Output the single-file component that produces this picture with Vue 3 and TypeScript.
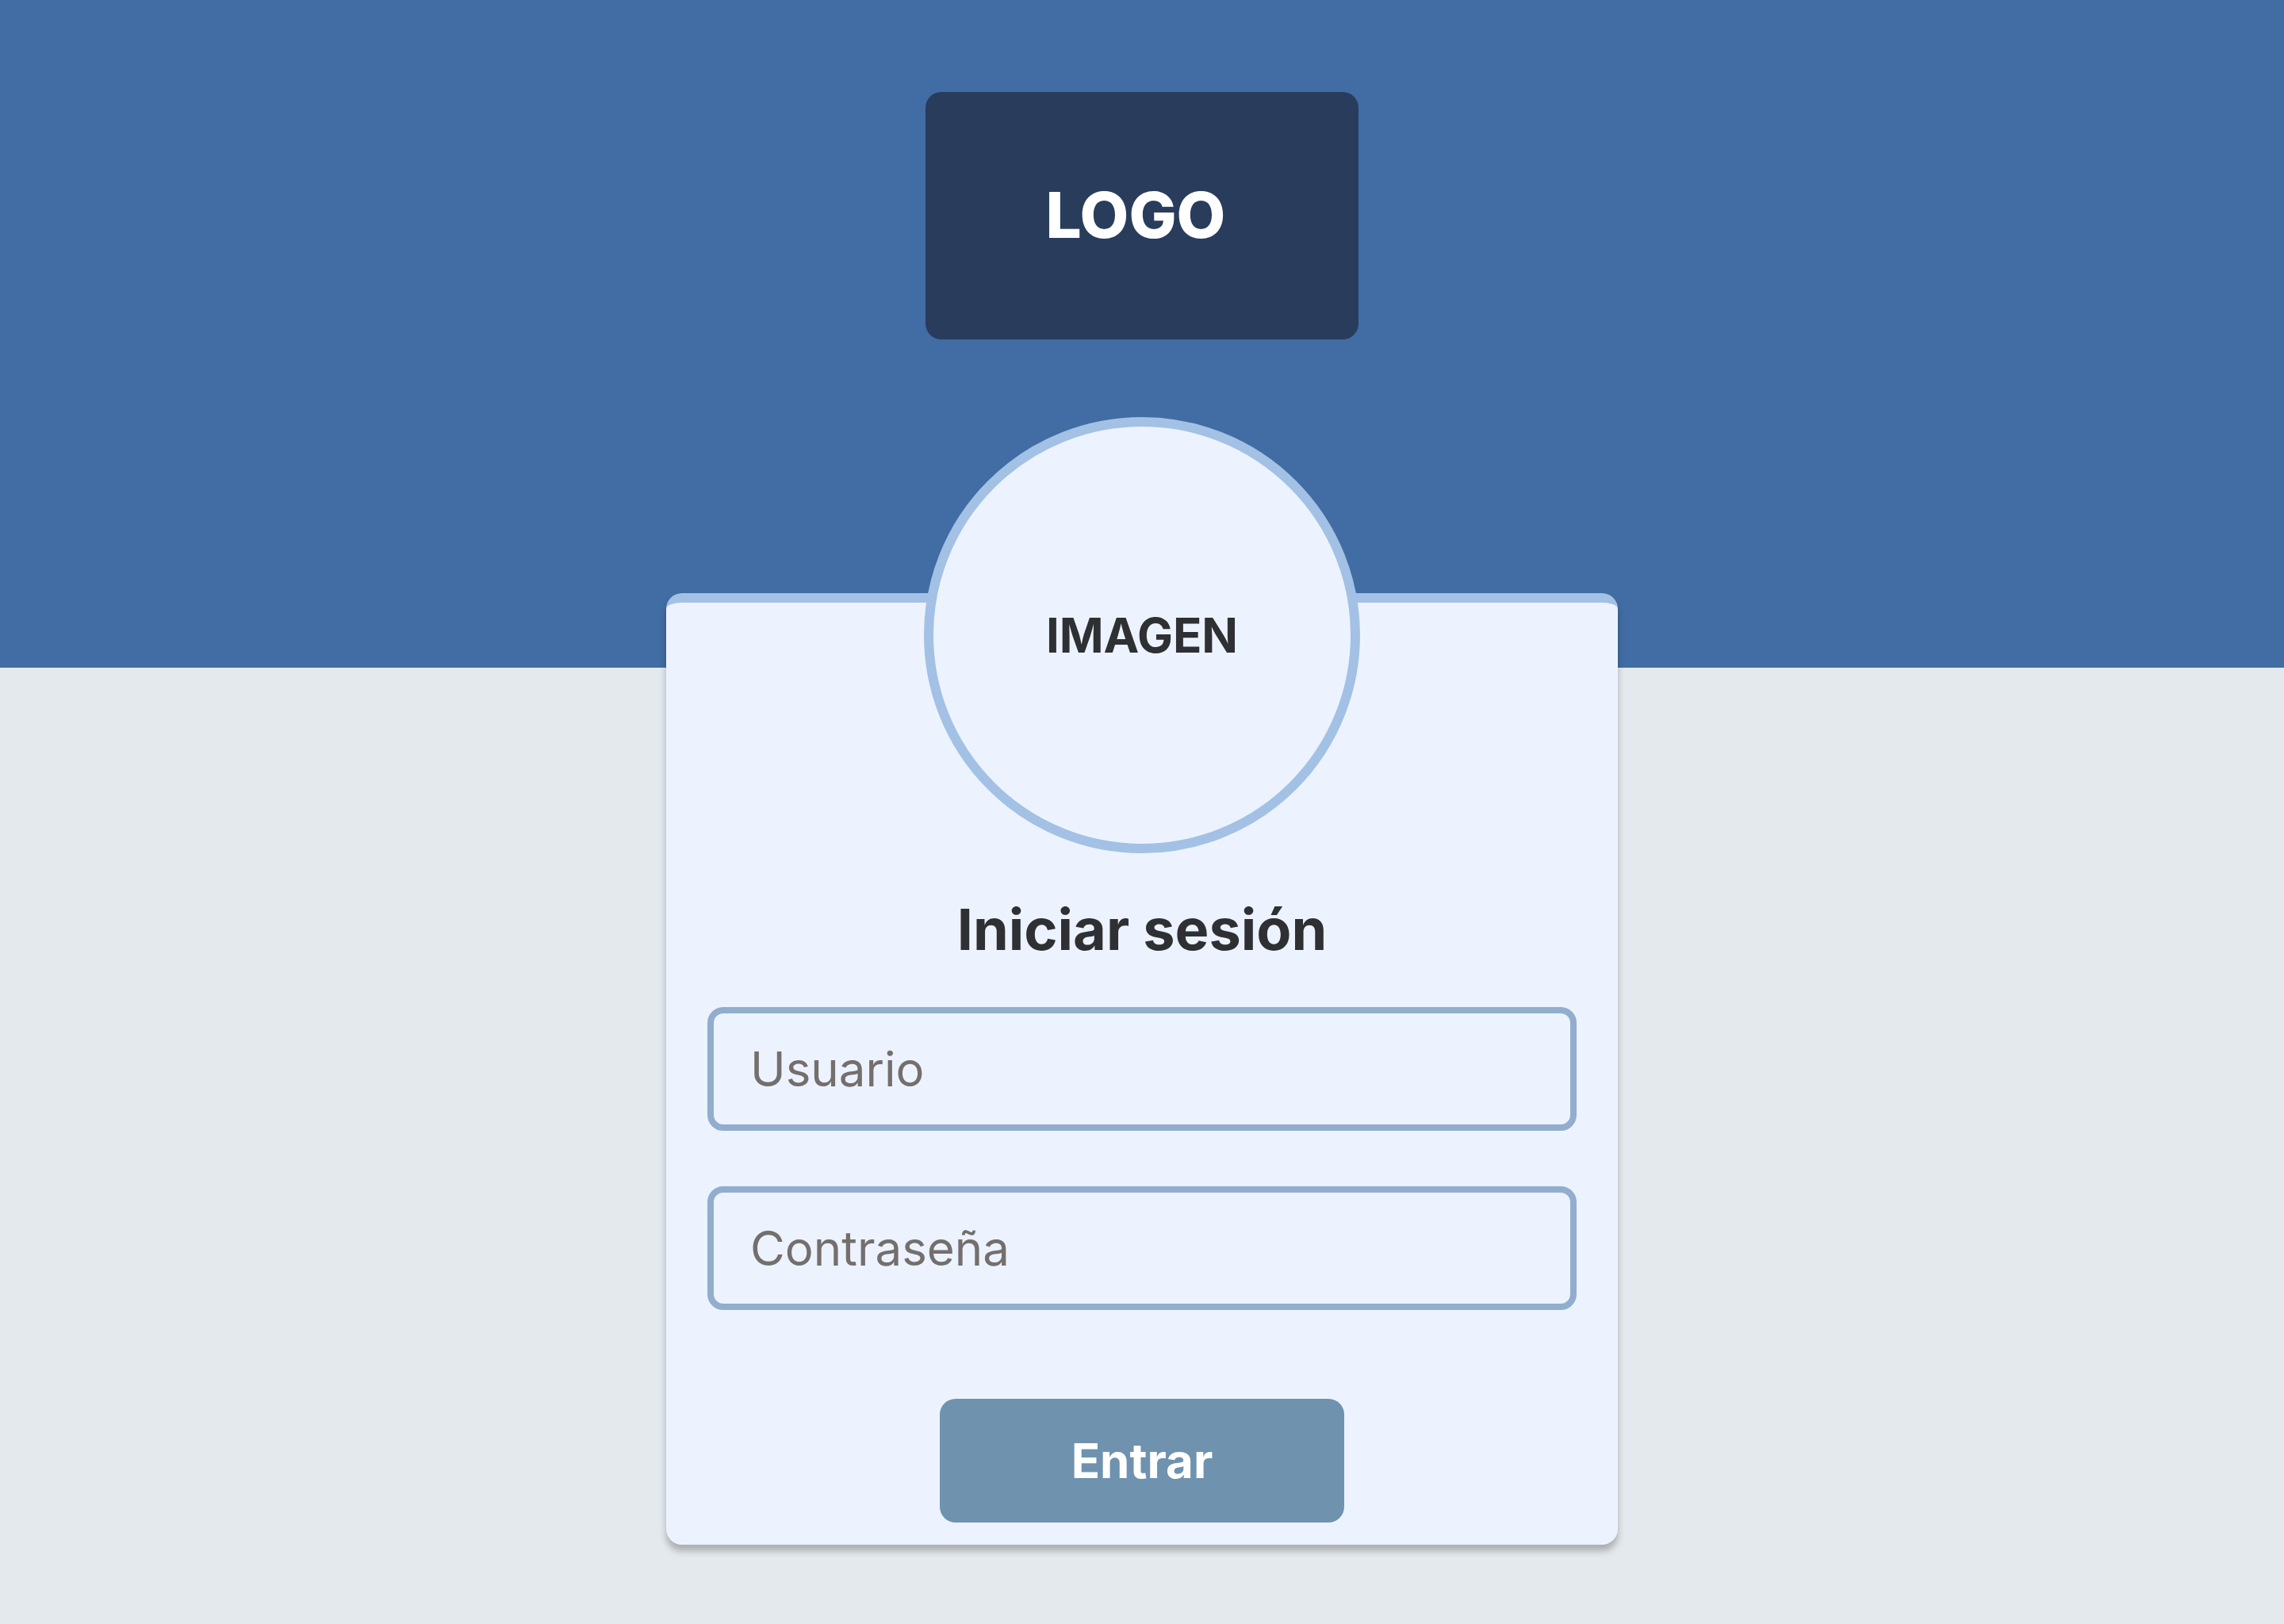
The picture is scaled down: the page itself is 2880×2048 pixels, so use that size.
<script setup lang="ts">
import { ref } from 'vue'

const username = ref('')
const password = ref('')
</script>

<template>
  <div class="page">
    <header class="banner">
      <div class="logo">LOGO</div>
    </header>
    <main class="content">
      <form class="card" @submit.prevent>
        <div class="avatar">IMAGEN</div>
        <h1 class="title">Iniciar sesión</h1>
        <div class="fields">
          <input v-model="username" class="field" type="text" name="username" aria-label="Usuario" placeholder="Usuario" autocomplete="username" />
          <input v-model="password" class="field" type="password" name="password" aria-label="Contraseña" placeholder="Contraseña" autocomplete="current-password" />
        </div>
        <button class="submit" type="submit">Entrar</button>
      </form>
    </main>
  </div>
</template>

<style>
body {
  margin: 0;
  background: #e4e9ed;
}
</style>

<style scoped>
.page {
  min-height: 100vh;
  box-sizing: border-box;
  padding-bottom: 100px;
  background: #e4e9ed;
  color: #2f3033;
  font-family: Inter, 'Liberation Sans', sans-serif;
}

.banner {
  display: flex;
  justify-content: center;
  padding: 116px 0 414px;
  background: #416ca4;
}

.logo {
  display: flex;
  align-items: center;
  justify-content: center;
  box-sizing: border-box;
  width: 546px;
  height: 312px;
  padding: 0 16px 2px 0;
  border-radius: 20px;
  background: #293c5c;
  color: #fff;
  font-size: 80px;
  font-weight: 800;
  line-height: 96px;
}

.content {
  display: flex;
  justify-content: center;
  margin-top: -94px;
}

.card {
  display: flex;
  flex-direction: column;
  align-items: center;
  box-sizing: border-box;
  width: 100%;
  max-width: 1200px;
  padding: 0 52px 28px;
  border-top: 12px solid #a3c1e4;
  border-radius: 20px;
  background: #ecf3ff;
  box-shadow: 0 8px 8px rgba(0, 0, 0, 0.25);
}

.avatar {
  display: flex;
  align-items: center;
  justify-content: center;
  box-sizing: border-box;
  width: 550px;
  height: 550px;
  margin-top: -234px;
  border: 12px solid #a3c1e4;
  border-radius: 50%;
  background: #ecf3ff;
  font-size: 60px;
  font-weight: 700;
  line-height: 72px;
}

.title {
  margin: 52px 0 54px;
  font-size: 72px;
  font-weight: 700;
  line-height: 88px;
}

.fields {
  display: flex;
  flex-direction: column;
  align-self: stretch;
  gap: 70px;
}

.field {
  box-sizing: border-box;
  width: 100%;
  height: 156px;
  padding: 0 46px;
  border: 8px solid #92adcd;
  border-radius: 20px;
  background: transparent;
  color: #2f3033;
  font-family: inherit;
  font-size: 60px;
  font-weight: 400;
}

.field::placeholder {
  color: #746f6d;
  opacity: 1;
}

.submit {
  width: 510px;
  height: 156px;
  margin-top: 112px;
  padding: 0;
  border: 0;
  border-radius: 20px;
  background: #6f92ae;
  color: #fff;
  font-family: inherit;
  font-size: 60px;
  font-weight: 700;
  cursor: pointer;
}
</style>
